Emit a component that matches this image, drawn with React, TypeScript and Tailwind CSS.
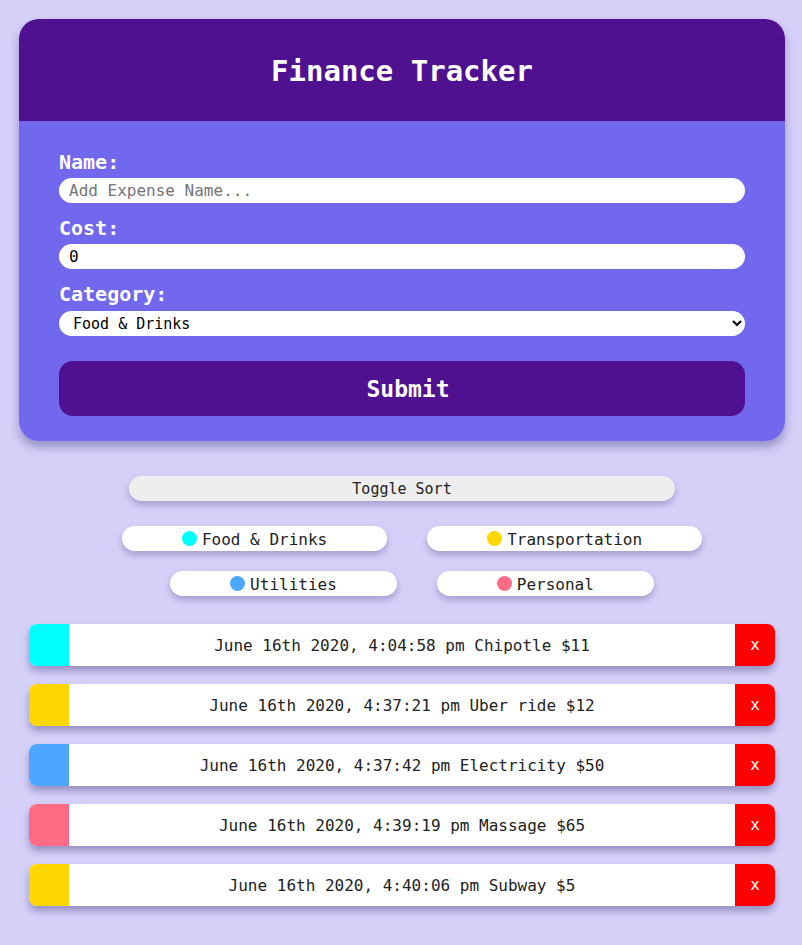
import { useState } from "react";

type Expense = { time: string; name: string; cost: number; color: string };

const categories = [
  { label: "Food & Drinks", color: "bg-[#00ffff]" },
  { label: "Transportation", color: "bg-[#ffd700]" },
  { label: "Utilities", color: "bg-[#4da6ff]" },
  { label: "Personal", color: "bg-[#ff6b85]" },
];

const initial: Expense[] = [
  { time: "June 16th 2020, 4:04:58 pm", name: "Chipotle", cost: 11, color: "bg-[#00ffff]" },
  { time: "June 16th 2020, 4:37:21 pm", name: "Uber ride", cost: 12, color: "bg-[#ffd700]" },
  { time: "June 16th 2020, 4:37:42 pm", name: "Electricity", cost: 50, color: "bg-[#4da6ff]" },
  { time: "June 16th 2020, 4:39:19 pm", name: "Massage", cost: 65, color: "bg-[#ff6b85]" },
  { time: "June 16th 2020, 4:40:06 pm", name: "Subway", cost: 5, color: "bg-[#ffd700]" },
];

function Pill({ label, color }: { label: string; color: string }) {
  return (
    <button className="flex items-center gap-[5px] h-[25px] px-[60px] pt-[2px] bg-white rounded-full text-[16px] text-[#222] shadow-[0_4px_6px_rgba(60,50,120,0.3)]">
      <span className={`w-[15px] h-[15px] rounded-full -mt-[2px] ${color}`} />
      <span>{label}</span>
    </button>
  );
}

export default function App() {
  const [expenses, setExpenses] = useState(initial);

  return (
    <div
      className="min-h-[945px] bg-[#d4d0f8] overflow-hidden"
      style={{ fontFamily: '"DejaVu Sans Mono", "Liberation Mono", monospace' }}
    >
      <div className="w-[804px] pt-[19px] pb-[39px]">
        <div className="mx-[19px] rounded-[20px] overflow-hidden shadow-[0_6px_10px_rgba(40,30,100,0.35)]">
          <div className="h-[102px] bg-[#4f1190] flex items-center justify-center pt-[3px]">
            <h1 className="text-white font-bold text-[29px]">Finance Tracker</h1>
          </div>
          <form className="bg-[#7168ed] px-[40px] pt-[28px] pb-[25px] flex flex-col" onSubmit={(e) => e.preventDefault()}>
            <label className="text-white font-bold text-[20px] leading-[26px] mb-[3px]">Name:</label>
            <input
              className="h-[25px] bg-white rounded-full pl-[10px] text-[16px] outline-none placeholder:text-[#757575]"
              placeholder="Add Expense Name..."
            />
            <label className="text-white font-bold text-[20px] leading-[26px] mt-[12px] mb-[3px]">Cost:</label>
            <input className="h-[25px] bg-white rounded-full pl-[10px] text-[16px] outline-none" defaultValue="0" />
            <label className="text-white font-bold text-[20px] leading-[26px] mt-[12px] mb-[4px]">Category:</label>
            <select className="h-[25px] bg-white rounded-full pl-[10px] pr-[6px] text-[15px] outline-none">
              {categories.map((c) => (
                <option key={c.label}>{c.label}</option>
              ))}
            </select>
            <button className="mt-[25px] h-[55px] rounded-[14px] bg-[#4f1190] text-white font-bold text-[23px] pl-[12px] pt-[2px]">
              Submit
            </button>
          </form>
        </div>

        <div className="flex justify-center mt-[35px]">
          <button className="w-[546px] h-[25px] pt-[2px] bg-[#eeeeee] rounded-full text-[15px] text-[#222] shadow-[0_4px_6px_rgba(60,50,120,0.3)]">
            Toggle Sort
          </button>
        </div>

        <div className="flex flex-col items-center gap-[20px] mt-[25px] pl-[20px]">
          <div className="flex gap-[40px]">
            <Pill {...categories[0]} />
            <Pill {...categories[1]} />
          </div>
          <div className="flex gap-[40px]">
            <Pill {...categories[2]} />
            <Pill {...categories[3]} />
          </div>
        </div>

        <div className="mx-[29px] mt-[28px] flex flex-col gap-[18px]">
          {expenses.map((e, i) => (
            <div
              key={e.time}
              className="flex h-[42px] rounded-[8px] overflow-hidden bg-white shadow-[0_5px_7px_rgba(40,30,100,0.35)]"
            >
              <div className={`w-[40px] ${e.color}`} />
              <div className="flex-1 flex items-center justify-center pt-[2px] text-[16px] text-[#222]">
                {e.time} {e.name} ${e.cost}
              </div>
              <button
                className="w-[40px] bg-[#ff0000] text-white text-[16px]"
                onClick={() => setExpenses(expenses.filter((_, j) => j !== i))}
              >
                x
              </button>
            </div>
          ))}
        </div>
      </div>
    </div>
  );
}
